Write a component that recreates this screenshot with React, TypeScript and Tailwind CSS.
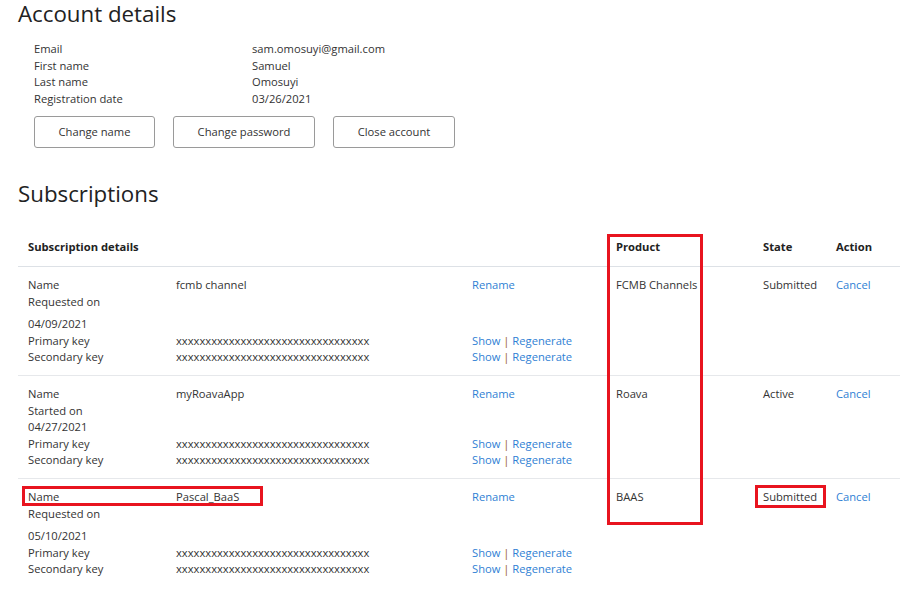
import React from "react";

type Sub = {
  name: string;
  dateLabel: string;
  date: string;
  gap: boolean;
  product: string;
  state: string;
};

const subs: Sub[] = [
  { name: "fcmb channel", dateLabel: "Requested on", date: "04/09/2021", gap: true, product: "FCMB Channels", state: "Submitted" },
  { name: "myRoavaApp", dateLabel: "Started on", date: "04/27/2021", gap: false, product: "Roava", state: "Active" },
  { name: "Pascal_BaaS", dateLabel: "Requested on", date: "05/10/2021", gap: true, product: "BAAS", state: "Submitted" },
];

const KEY = "xxxxxxxxxxxxxxxxxxxxxxxxxxxxxxxxx";

const KeyLinks = () => (
  <span className="text-[#2f7fd4]">
    Show <span className="text-[#9c5f2c]">|</span> Regenerate
  </span>
);

const App = () => {
  return (
    <div className="w-[902px] h-[594px] overflow-hidden bg-white pl-[18px] pr-[2px] text-[11.2px] leading-[16.5px] text-[#333] font-['Open_Sans',sans-serif]">
      {/* ACCOUNT */}
      <h1 className="text-[22.3px] leading-[28px] text-[#222]">Account details</h1>
      <div className="grid grid-cols-[218px_1fr] pl-[16px] mt-[13px]">
        <span>Email</span>
        <span>sam.omosuyi@gmail.com</span>
        <span>First name</span>
        <span>Samuel</span>
        <span>Last name</span>
        <span>Omosuyi</span>
        <span>Registration date</span>
        <span>03/26/2021</span>
      </div>
      <div className="flex gap-[18px] pl-[16px] mt-[9px]">
        <button className="w-[121px] h-[32px] border border-[#9a9a9a] rounded-[3px] text-[#333]">Change name</button>
        <button className="w-[142px] h-[32px] border border-[#9a9a9a] rounded-[3px] text-[#333]">Change password</button>
        <button className="w-[122px] h-[32px] border border-[#9a9a9a] rounded-[3px] text-[#333]">Close account</button>
      </div>

      {/* SUBSCRIPTIONS */}
      <h2 className="text-[22.3px] leading-[28px] text-[#222] mt-[32px]">Subscriptions</h2>
      <div className="relative mt-[21px]">
        <div className="flex items-center h-[38px] border-b border-[#dde1e6] font-bold text-[#222]">
          <div className="w-[598px] pl-[10px]">Subscription details</div>
          <div className="w-[147px]">Product</div>
          <div className="w-[73px]">State</div>
          <div>Action</div>
        </div>
        {subs.map((s, i) => (
          <div
            key={i}
            className={`flex items-start pt-[10px] pb-[9.5px] ${i < subs.length - 1 ? "border-b border-[#e6e8eb]" : ""}`}
          >
            <div className="w-[598px] grid grid-cols-[158px_296px_144px]">
              <span className="pl-[10px]">Name</span>
              <span>{s.name}</span>
              <span className="text-[#2f7fd4]">Rename</span>
              <span className="pl-[10px] col-span-3">{s.dateLabel}</span>
              <span className={`pl-[10px] col-span-3 ${s.gap ? "mt-[6px]" : ""}`}>{s.date}</span>
              <span className="pl-[10px]">Primary key</span>
              <span>{KEY}</span>
              <KeyLinks />
              <span className="pl-[10px]">Secondary key</span>
              <span>{KEY}</span>
              <KeyLinks />
            </div>
            <div className="w-[147px]">{s.product}</div>
            <div className="w-[73px]">{s.state}</div>
            <div className="text-[#2f7fd4]">Cancel</div>
          </div>
        ))}

        {/* annotation boxes */}
        <div className="absolute top-[5px] left-[589px] w-[96px] h-[291px] border-[3px] border-[#e8141f]" />
        <div className="absolute top-[257px] left-[4px] w-[241px] h-[20px] border-[3px] border-[#e8141f]" />
        <div className="absolute top-[256px] left-[737px] w-[71px] h-[23px] border-[3px] border-[#e8141f]" />
      </div>
    </div>
  );
};

export default App;
